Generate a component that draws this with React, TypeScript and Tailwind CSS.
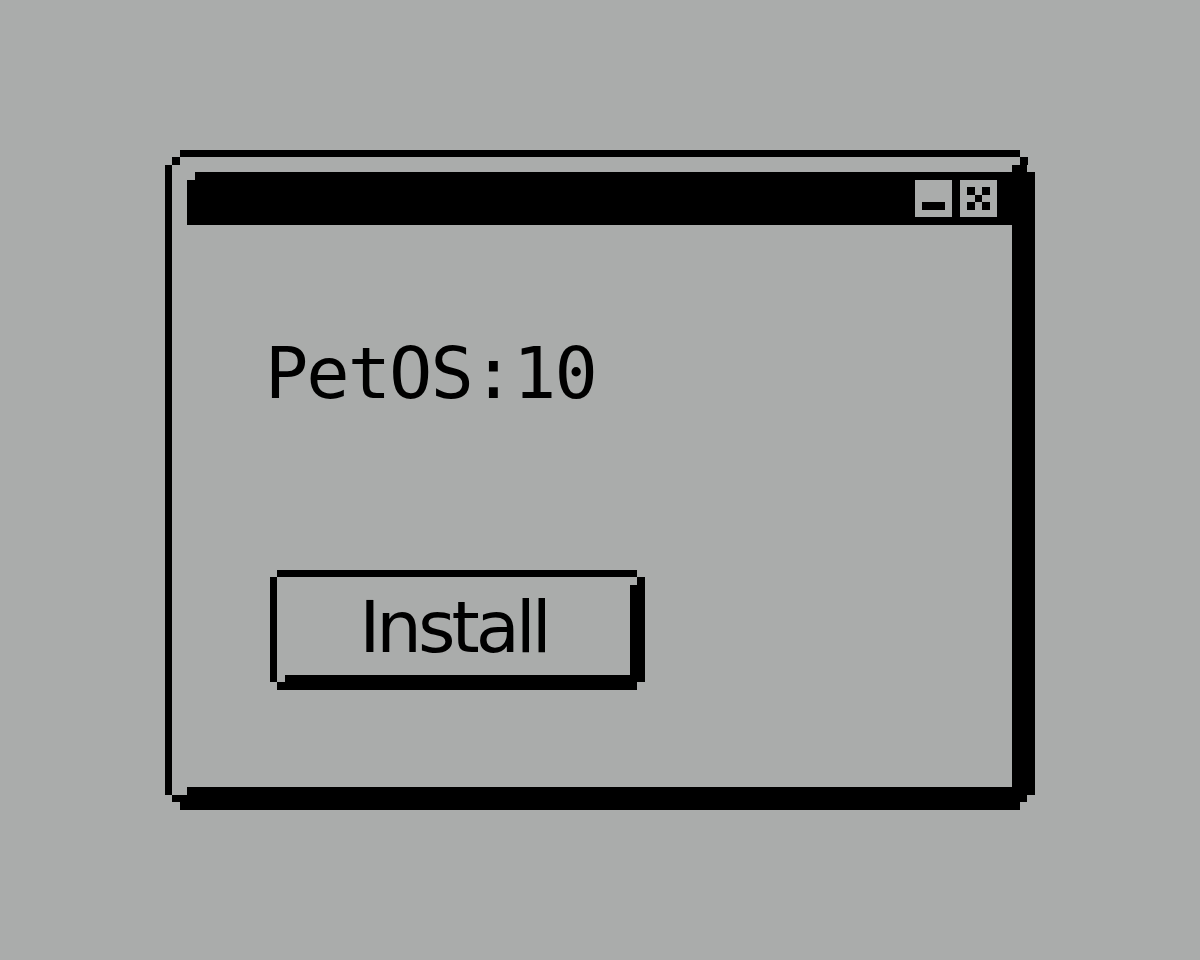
import React from "react";

const font = "font-['DejaVu_Sans_Mono',monospace]";

function TitleButton({ kind }: { kind: "min" | "close" }) {
  return (
    <div className="w-[37px] h-[37px] bg-[#aaacab]">
      <svg width="37" height="37" viewBox="0 0 5 5" shapeRendering="crispEdges">
        {kind === "min" ? (
          <rect x="1" y="3" width="3" height="1" fill="#000" />
        ) : (
          <g fill="#000">
            <rect x="1" y="1" width="1" height="1" />
            <rect x="3" y="1" width="1" height="1" />
            <rect x="2" y="2" width="1" height="1" />
            <rect x="1" y="3" width="1" height="1" />
            <rect x="3" y="3" width="1" height="1" />
          </g>
        )}
      </svg>
    </div>
  );
}

// Pixel-art push button: thin top/left edge, thick bottom/right edge, stepped corners
function InstallButton() {
  return (
    <div className="ml-[98px] mt-[161px] flex w-[375px] flex-col">
      <div className="flex h-[7px]">
        <div className="w-[7px]" />
        <div className="w-[360px] bg-black" />
      </div>
      <div className="flex h-[98px]">
        <div className="w-[7px] bg-black" />
        <div className="flex flex-1 items-center justify-center pt-[2px]">
          <span className="font-['DejaVu_Sans',sans-serif] text-[72px] leading-[72px] tracking-[-4px] text-black">
            Install
          </span>
        </div>
        <div className="flex w-[15px] flex-col">
          <div className="flex h-[8px]">
            <div className="w-[7px]" />
            <div className="w-[8px] bg-black" />
          </div>
          <div className="flex-1 bg-black" />
        </div>
      </div>
      <div className="flex h-[7px]">
        <div className="w-[7px] bg-black" />
        <div className="w-[8px]" />
        <div className="flex-1 bg-black" />
      </div>
      <div className="flex h-[8px]">
        <div className="w-[7px]" />
        <div className="w-[360px] bg-black" />
      </div>
    </div>
  );
}

export default function App() {
  return (
    <main className="w-full h-[960px] bg-[#aaacab] pt-[150px] pl-[165px]">
      {/* Window frame */}
      <div className="flex w-[870px] h-[660px] flex-col">
        <div className="flex h-[7px]">
          <div className="w-[15px]" />
          <div className="flex-1 bg-black" />
          <div className="w-[15px]" />
        </div>
        <div className="flex h-[8px]">
          <div className="w-[7px]" />
          <div className="w-[8px] bg-black" />
          <div className="flex-1" />
          <div className="w-[8px] bg-black" />
          <div className="w-[7px]" />
        </div>

        <div className="flex flex-1">
          <div className="w-[7px] bg-black" />

          {/* Window content */}
          <div className="flex flex-1 flex-col">
            <div className="ml-[15px] mt-[7px] flex h-[53px] flex-col">
              <div className="flex h-[8px]">
                <div className="w-[8px]" />
                <div className="flex-1 bg-black" />
              </div>
              <div className="flex flex-1 justify-end gap-[8px] bg-black pr-[15px]">
                <TitleButton kind="min" />
                <TitleButton kind="close" />
              </div>
            </div>

            <p className={`${font} ml-[93px] mt-[112px] text-[72px] leading-[72px] tracking-[-2px] text-black`}>
              PetOS:10
            </p>

            <InstallButton />
          </div>

          <div className="flex w-[23px] flex-col">
            <div className="flex h-[7px]">
              <div className="w-[15px] bg-black" />
            </div>
            <div className="flex-1 bg-black" />
          </div>
        </div>

        <div className="flex h-[8px]">
          <div className="w-[7px] bg-black" />
          <div className="w-[15px]" />
          <div className="flex-1 bg-black" />
        </div>
        <div className="flex h-[7px]">
          <div className="w-[7px]" />
          <div className="flex-1 bg-black" />
          <div className="w-[8px]" />
        </div>
        <div className="flex h-[8px]">
          <div className="w-[15px]" />
          <div className="flex-1 bg-black" />
          <div className="w-[15px]" />
        </div>
      </div>
    </main>
  );
}
